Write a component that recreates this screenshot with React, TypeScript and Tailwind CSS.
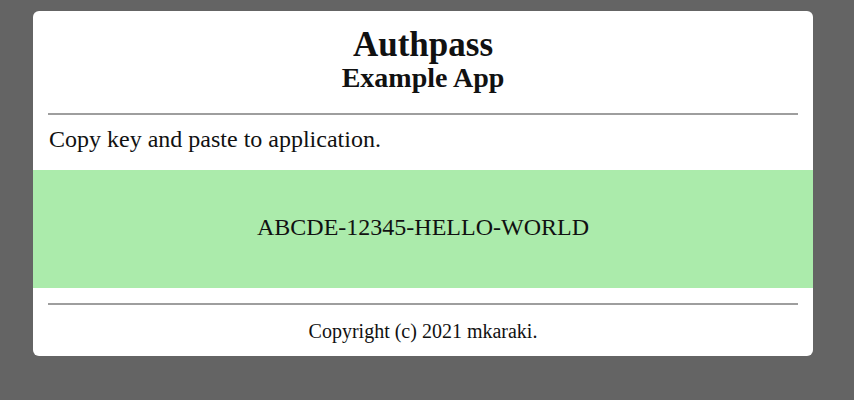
export default function App() {
  return (
    <div className="min-h-[400px] w-full bg-[#646464] pt-[11px] pb-[44px] font-['Liberation_Serif','Times_New_Roman',serif] text-[#111]">
      <div className="ml-[33px] w-[780px] rounded-[6px] bg-white pt-[16px] pb-[15px]">
        <h1 className="text-center text-[35px] font-bold leading-[36px]">Authpass</h1>
        <h2 className="text-center text-[28px] font-bold leading-[30px]">Example App</h2>
        <div className="mx-[15px] mt-[20px] h-[2px] bg-[#9e9e9e]" />
        <p className="mt-[12px] px-[16px] text-[24px] leading-[24px]">Copy key and paste to application.</p>
        <div className="mt-[19px] h-[118px] bg-[#abebab] pt-[45px] text-center text-[24px] leading-[24px]">
          ABCDE-12345-HELLO-WORLD
        </div>
        <div className="mx-[15px] mt-[15px] h-[2px] bg-[#9e9e9e]" />
        <p className="mt-[16px] text-center text-[20px] leading-[20px]">Copyright (c) 2021 mkaraki.</p>
      </div>
    </div>
  );
}
